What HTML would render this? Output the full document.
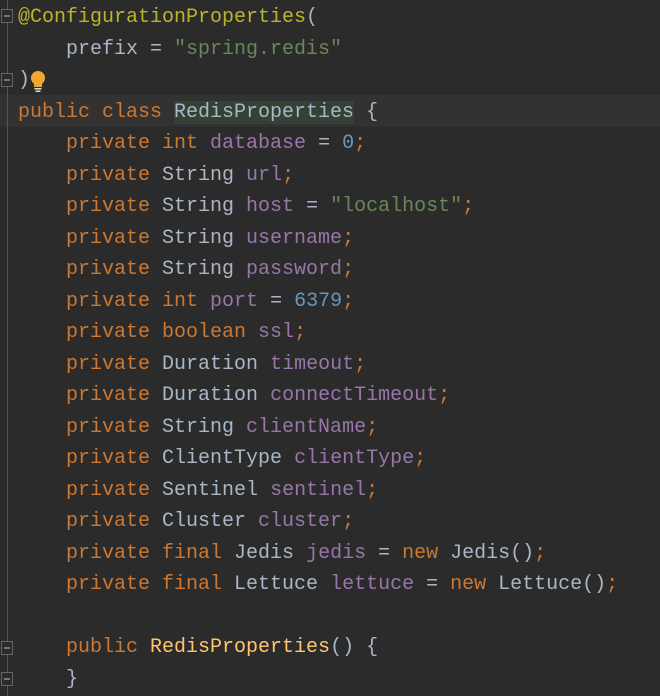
<!DOCTYPE html>
<html><head><meta charset="utf-8"><style>
html,body{margin:0;padding:0;background:#2b2b2b;width:660px;height:696px;overflow:hidden}
.code{position:absolute;left:18px;top:2px;font-family:"Liberation Mono",monospace;font-size:20px;line-height:31.52px;color:#a9b7c6;white-space:pre}
.k{color:#cc7832}.f{color:#9876aa}.s{color:#6a8759}.n{color:#6897bb}.a{color:#bbb529}.m{color:#ffc66d}
.cur{position:absolute;left:0;top:95px;width:660px;height:32px;background:#323232}
.hl{background:#344134}
.gl{position:absolute;left:7px;top:0;width:1px;height:696px;background:#555}
.fold{position:absolute;left:1px;width:12px;height:14px;background:#2b2b2b;border:1px solid #666;box-sizing:border-box}
.fold:after{content:"";position:absolute;left:2px;top:5px;width:6px;height:2px;background:#777}
</style></head><body>
<div class="cur"></div>
<div class="gl"></div>
<div class="fold" style="top:9px"></div>
<div class="fold" style="top:73px"></div>
<div class="fold" style="top:641px"></div>
<div class="fold" style="top:672px"></div>
<svg style="position:absolute;left:29px;top:70px" width="18" height="24" viewBox="0 0 18 24"><circle cx="9" cy="8" r="7" fill="#f0a732"/><rect x="5" y="13" width="8" height="4" fill="#f0a732"/><rect x="5.5" y="18" width="7" height="1.5" fill="#ddd"/><rect x="6.5" y="20.5" width="5" height="1.5" fill="#ddd"/></svg>
<div class="code"><span class="a">@ConfigurationProperties</span>(
    prefix = <span class="s">"spring.redis"</span>
)
<span class="k">public class </span><span class="hl">RedisProperties</span> {
    <span class="k">private int </span><span class="f">database</span> = <span class="n">0</span><span class="k">;</span>
    <span class="k">private </span>String <span class="f">url</span><span class="k">;</span>
    <span class="k">private </span>String <span class="f">host</span> = <span class="s">"localhost"</span><span class="k">;</span>
    <span class="k">private </span>String <span class="f">username</span><span class="k">;</span>
    <span class="k">private </span>String <span class="f">password</span><span class="k">;</span>
    <span class="k">private int </span><span class="f">port</span> = <span class="n">6379</span><span class="k">;</span>
    <span class="k">private boolean </span><span class="f">ssl</span><span class="k">;</span>
    <span class="k">private </span>Duration <span class="f">timeout</span><span class="k">;</span>
    <span class="k">private </span>Duration <span class="f">connectTimeout</span><span class="k">;</span>
    <span class="k">private </span>String <span class="f">clientName</span><span class="k">;</span>
    <span class="k">private </span>ClientType <span class="f">clientType</span><span class="k">;</span>
    <span class="k">private </span>Sentinel <span class="f">sentinel</span><span class="k">;</span>
    <span class="k">private </span>Cluster <span class="f">cluster</span><span class="k">;</span>
    <span class="k">private final </span>Jedis <span class="f">jedis</span> = <span class="k">new </span>Jedis()<span class="k">;</span>
    <span class="k">private final </span>Lettuce <span class="f">lettuce</span> = <span class="k">new </span>Lettuce()<span class="k">;</span>

    <span class="k">public </span><span class="m">RedisProperties</span>() {
    }
</div>
</body></html>
